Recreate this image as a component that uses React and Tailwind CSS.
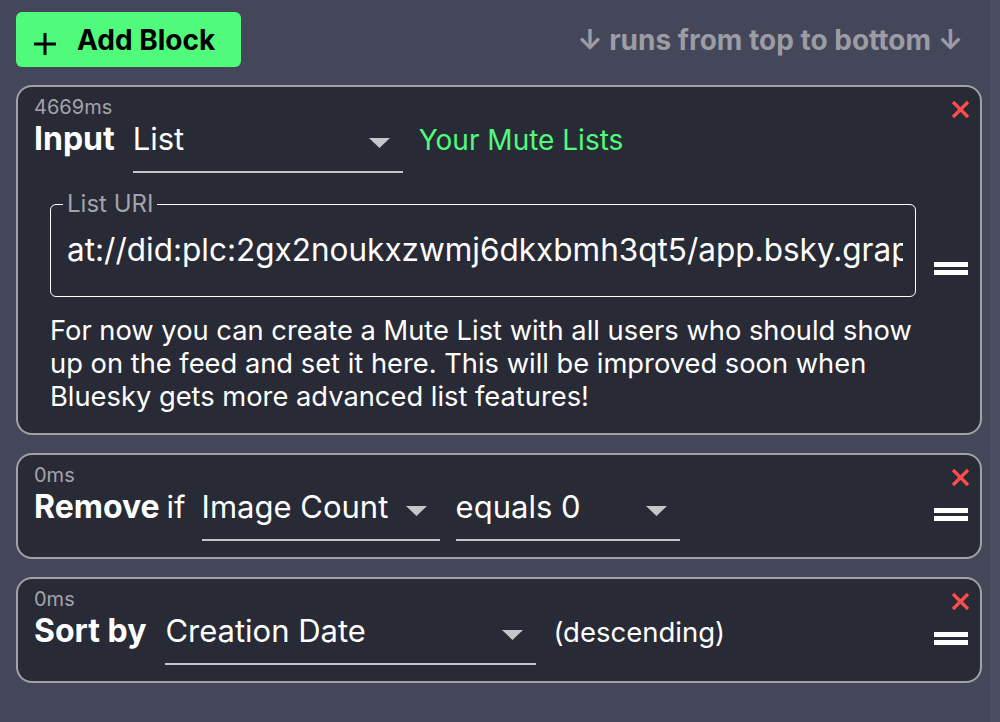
import React from "react";

const font = { fontFamily: "Inter, 'Noto Sans', sans-serif" };

function Triangle() {
  return (
    <svg width="21" height="10" viewBox="0 0 21 10" className="ml-auto mt-2 shrink-0">
      <polygon points="0,0 21,0 10.5,10" fill="#c5c5ca" />
    </svg>
  );
}

function Select({ value, width }) {
  return (
    <div
      className={`flex items-center border-b-2 border-[#c3c3c8] pb-[14px] pr-[13px] text-[31px] leading-[36px] text-white ${width}`}
    >
      <span className="whitespace-nowrap">{value}</span>
      <Triangle />
    </div>
  );
}

function CloseX() {
  return (
    <button className="absolute right-[10px] top-[13px]">
      <svg width="19" height="19" viewBox="0 0 19 19">
        <path d="M2 2 L17 17 M17 2 L2 17" stroke="#ff4d4d" strokeWidth="3.2" />
      </svg>
    </button>
  );
}

function Handle() {
  return (
    <div className="mt-[6px] flex w-[34px] flex-col gap-[3px]">
      <div className="h-[5px] bg-white" />
      <div className="h-[5px] bg-white" />
    </div>
  );
}

function Block({ ms, children, extra }) {
  return (
    <div className="relative flex rounded-[16px] border-2 border-[#a2a2a6] bg-[#282a36] pl-4 pr-[12px] pt-[10px]">
      <div className="min-w-0 flex-1">
        <div className="text-[20px] leading-[20px] text-[#a3a3aa]">{ms}</div>
        <div className="mt-[4px] flex items-baseline text-[31px] leading-[36px] text-white">
          {children}
        </div>
        {extra}
      </div>
      <div className="flex items-center pl-[18px]">
        <Handle />
      </div>
      <CloseX />
    </div>
  );
}

export default function App() {
  return (
    <div className="flex min-h-[722px] bg-[#44475a]" style={font}>
      <div className="min-w-0 flex-1 pl-4 pr-[8px] pt-3">
        <div className="flex items-center justify-between">
          <button className="flex h-[55px] items-center gap-[20px] rounded-md bg-[#50fa7b] pl-[17px] pr-[26px] text-[28px] font-bold text-black">
            <svg width="24" height="24" viewBox="0 0 24 24" className="mt-[8px]">
              <path d="M12 1 V23 M1 12 H23" stroke="black" strokeWidth="3" />
            </svg>
            Add Block
          </button>
          <div className="mr-[19px] text-[28px] font-bold text-[#9c9ca4]">
            ↓ runs from top to bottom ↓
          </div>
        </div>

        <div className="mt-[18px] flex flex-col gap-[18px]">
          <Block
            ms="4669ms"
            extra={
              <div className="pb-[20px] pl-4">
                <fieldset className="mt-[19px] min-w-0 rounded-md border-[1.5px] border-white px-3 pb-[12px]">
                  <legend className="px-1 text-[24px] leading-[24px] text-[#a3a3aa]">List URI</legend>
                  <div className="flex h-[68px] items-center overflow-hidden whitespace-nowrap pl-1 pr-[2px] text-[31.5px] text-white">
                    at://did:plc:2gx2noukxzwmj6dkxbmh3qt5/app.bsky.graph.list/3jzlrfvm7lh2c
                  </div>
                </fieldset>
                <p className="mt-[17px] text-[27.3px] leading-[33px] text-white">
                  For now you can create a Mute List with all users who should show up on the feed and set
                  it here. This will be improved soon when Bluesky gets more advanced list features!
                </p>
              </div>
            }
          >
            <span className="mr-[18px] text-[32px] font-bold">Input</span>
            <Select value="List" width="w-[270px]" />
            <span className="ml-4 text-[28px] text-[#50fa7b]">Your Mute Lists</span>
          </Block>

          <Block ms="0ms" extra={<div className="h-[16px]" />}>
            <span className="text-[32px] font-bold">Remove</span>
            <span className="ml-[7px] mr-[16px]">if</span>
            <Select value="Image Count" width="w-[238px]" />
            <div className="ml-4">
              <Select value="equals 0" width="w-[224px]" />
            </div>
          </Block>

          <Block ms="0ms" extra={<div className="h-[16px]" />}>
            <span className="mr-[19px] text-[32px] font-bold">Sort by</span>
            <Select value="Creation Date" width="w-[371px]" />
            <span className="ml-[17px] text-[27.5px]">(descending)</span>
          </Block>
        </div>
      </div>
      <div className="w-[10px] bg-[#4b4d60]" />
    </div>
  );
}
